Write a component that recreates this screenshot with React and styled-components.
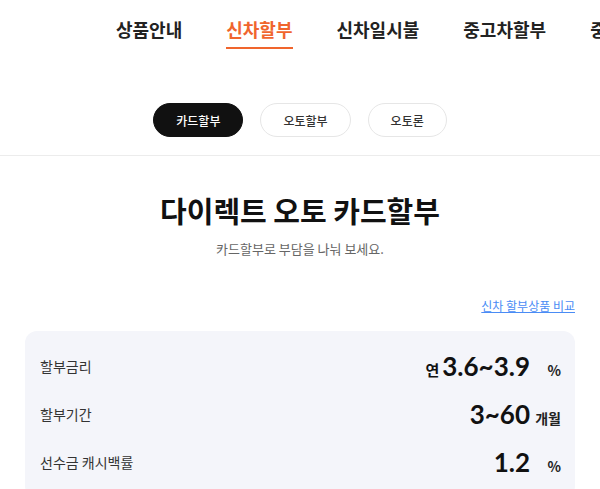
import React, { useState } from "react"
import styled, { createGlobalStyle } from "styled-components"

const GlobalStyle = createGlobalStyle`
  body {
    margin: 0;
    background: #fff;
    font-family: "Noto Sans CJK KR", "Noto Sans", sans-serif;
    color: #111;
  }
`

const Page = styled.div`
  width: 600px;
  overflow: hidden;
`

const Nav = styled.nav`
  display: flex;
  gap: 44px;
  padding-left: 116px;
  white-space: nowrap;
`

const NavItem = styled.a`
  display: block;
  padding: 18px 0 7px;
  font-size: 18px;
  line-height: 22px;
  font-weight: 700;
  color: ${(p) => (p.active ? "#f0652d" : "#222")};
  border-bottom: 2px solid ${(p) => (p.active ? "#f0652d" : "transparent")};
  cursor: pointer;
`

const SubTabs = styled.div`
  display: flex;
  justify-content: center;
  gap: 17px;
  padding: 54px 0 18px;
  border-bottom: 1px solid #ececec;
`

const Pill = styled.button`
  height: 34px;
  padding: 0 22px;
  border-radius: 17px;
  border: 1px solid ${(p) => (p.active ? "#111" : "#e6e6e6")};
  background: ${(p) => (p.active ? "#111" : "#fff")};
  color: ${(p) => (p.active ? "#fff" : "#333")};
  font-family: inherit;
  font-size: 12px;
  font-weight: 500;
  cursor: pointer;
`

const Hero = styled.section`
  display: flex;
  flex-direction: column;
  align-items: center;
  padding-top: 34px;
`

const Title = styled.h1`
  margin: 0;
  font-size: 29px;
  font-weight: 700;
  line-height: 40px;
  color: #111;
`

const Sub = styled.p`
  margin: 10px 0 0;
  font-size: 13px;
  line-height: 18px;
  color: #666;
`

const LinkRow = styled.div`
  display: flex;
  justify-content: flex-end;
  padding: 39px 25px 0;
`

const CompareLink = styled.a`
  font-size: 12px;
  line-height: 18px;
  color: #4a8cf5;
  text-decoration: underline;
  cursor: pointer;
`

const Card = styled.div`
  margin: 16px 25px 0;
  padding: 11px 14px 12px 15px;
  background: #f4f5fa;
  border-radius: 12px;
`

const Row = styled.div`
  display: flex;
  align-items: center;
  justify-content: space-between;
  height: 48px;
`

const Label = styled.span`
  font-size: 14px;
  color: #333;
`

const Value = styled.span`
  display: flex;
  align-items: baseline;
`

const Prefix = styled.span`
  font-size: 15px;
  font-weight: 700;
  margin-right: 3px;
`

const Num = styled.span`
  font-family: "Lato", "Noto Sans", sans-serif;
  font-size: 26px;
  font-weight: 700;
  color: #111;
`

const Unit = styled.span`
  display: inline-block;
  min-width: 28px;
  margin-left: 3px;
  text-align: right;
  font-size: 14px;
  font-weight: 700;
  color: #222;
`

const navItems = ["상품안내", "신차할부", "신차일시불", "중고차할부", "중고차일시불"]
const tabs = ["카드할부", "오토할부", "오토론"]
const rows = [
  { label: "할부금리", prefix: "연", num: "3.6~3.9", unit: "%" },
  { label: "할부기간", num: "3~60", unit: "개월" },
  { label: "선수금 캐시백률", num: "1.2", unit: "%" },
]

const App = () => {
  const [tab, setTab] = useState(0)

  return (
    <Page>
      <GlobalStyle />
      <Nav>
        {navItems.map((n, i) => (
          <NavItem key={n} active={i === 1}>
            {n}
          </NavItem>
        ))}
      </Nav>
      <SubTabs>
        {tabs.map((t, i) => (
          <Pill key={t} active={i === tab} onClick={() => setTab(i)}>
            {t}
          </Pill>
        ))}
      </SubTabs>
      <Hero>
        <Title>다이렉트 오토 카드할부</Title>
        <Sub>카드할부로 부담을 나눠 보세요.</Sub>
      </Hero>
      <LinkRow>
        <CompareLink>신차 할부상품 비교</CompareLink>
      </LinkRow>
      <Card>
        {rows.map((r) => (
          <Row key={r.label}>
            <Label>{r.label}</Label>
            <Value>
              {r.prefix && <Prefix>{r.prefix}</Prefix>}
              <Num>{r.num}</Num>
              <Unit>{r.unit}</Unit>
            </Value>
          </Row>
        ))}
      </Card>
    </Page>
  )
}

export default App
